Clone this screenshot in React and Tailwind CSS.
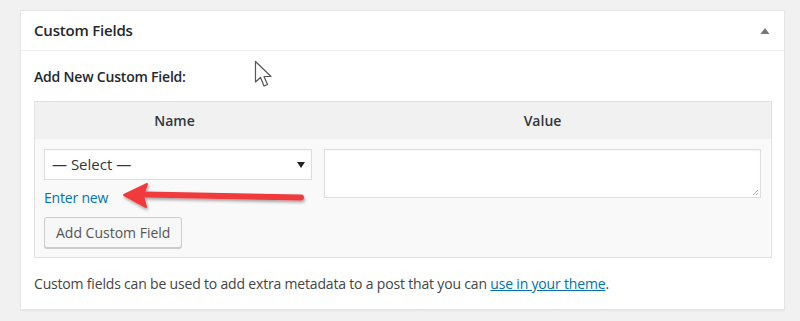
import React from 'react'

function RedArrow() {
    return (
        <svg className="absolute left-[118px] top-[180px]" width="195" height="34" viewBox="0 0 195 34">
            <defs>
                <filter id="sh" x="-10%" y="-50%" width="120%" height="200%">
                    <feDropShadow dx="1" dy="2" stdDeviation="1.5" floodColor="#000" floodOpacity="0.35" />
                </filter>
            </defs>
            <g filter="url(#sh)">
                <path d="M28 14.5 L183 17.5" stroke="#f03a3e" strokeWidth="6" strokeLinecap="round" fill="none" />
                <path d="M6 15 L29 4 L25 15.5 L28 27 Z" fill="#f03a3e" stroke="#f03a3e" strokeWidth="2" strokeLinejoin="round" />
            </g>
        </svg>
    )
}

function Cursor() {
    return (
        <svg className="absolute left-[254px] top-[60px]" width="22" height="30" viewBox="0 0 22 30">
            <path d="M1.5 1.5 L1.5 22 L6.5 17.5 L10 26 L13.5 24.5 L10 16.5 L17 16.5 Z" fill="#fff" stroke="#555" strokeWidth="1.2" strokeLinejoin="round" />
        </svg>
    )
}

export default function App() {
    return (
        <div className="relative w-[800px] h-[321px] bg-[#f1f1f1] pt-[10px] pl-[20px] font-['Open_Sans',sans-serif] text-[#23282d]">
            <div className="w-[765px] h-[300px] bg-white border border-[#e5e5e5] shadow-[0_1px_1px_rgba(0,0,0,0.04)]">
                <div className="flex items-center justify-between h-[40px] pl-[13px] pr-[14px] border-b border-[#eee]">
                    <h2 className="text-[15px] font-semibold text-[#23282d] tracking-[-0.2px]">Custom Fields</h2>
                    <svg width="10" height="8" viewBox="0 0 10 8"><path d="M5 1 L9.5 7 L0.5 7 Z" fill="#72777c" /></svg>
                </div>
                <div className="pl-[13px] pr-[12px]">
                    <p className="text-[14px] font-semibold mt-[15px] mb-[13px] leading-[22px] tracking-[-0.2px]">Add New Custom Field:</p>
                    <div className="border border-[#e1e1e1] bg-[#f9f9f9]">
                        <div className="grid grid-cols-[279px_1fr] bg-[#f1f1f1] h-[37px] items-center text-[14px] font-semibold text-[#32373c]">
                            <div className="text-center">Name</div>
                            <div className="text-center">Value</div>
                        </div>
                        <div className="grid grid-cols-[279px_1fr] pt-[10px] pb-[9px]">
                            <div className="pl-[9px] pr-[2px]">
                                <div className="flex items-center justify-between h-[31px] bg-white border border-[#ddd] pl-[7px] pr-[6px] text-[15px] text-[#32373c] shadow-[inset_0_1px_2px_rgba(0,0,0,0.04)]">
                                    <span>— Select —</span>
                                    <svg width="8" height="6" viewBox="0 0 8 6"><path d="M0 0 L8 0 L4 6 Z" fill="#222" /></svg>
                                </div>
                                <div className="mt-[8px] text-[14px] text-[#0073aa] leading-[20px] tracking-[-0.2px]">Enter new</div>
                                <button className="mt-[9px] h-[31px] px-[11px] text-[14px] text-[#555] bg-[#f7f7f7] border border-[#ccc] rounded-[3px] shadow-[0_1px_0_#ccc]">Add Custom Field</button>
                            </div>
                            <div className="pl-[10px] pr-[10px]">
                                <div className="relative h-[49px] bg-white border border-[#ddd] shadow-[inset_0_1px_2px_rgba(0,0,0,0.04)]">
                                    <svg className="absolute right-[1px] bottom-[1px]" width="7" height="7" viewBox="0 0 7 7">
                                        <path d="M6 1 L1 6 M6 4 L4 6" stroke="#999" strokeWidth="0.8" />
                                    </svg>
                                </div>
                            </div>
                        </div>
                    </div>
                    <p className="mt-[16px] text-[14px] text-[#444] leading-[20px] tracking-[-0.18px]">
                        Custom fields can be used to add extra metadata to a post that you can <span className="text-[#0073aa] underline">use in your theme</span>.
                    </p>
                </div>
            </div>
            <RedArrow />
            <Cursor />
        </div>
    )
}
